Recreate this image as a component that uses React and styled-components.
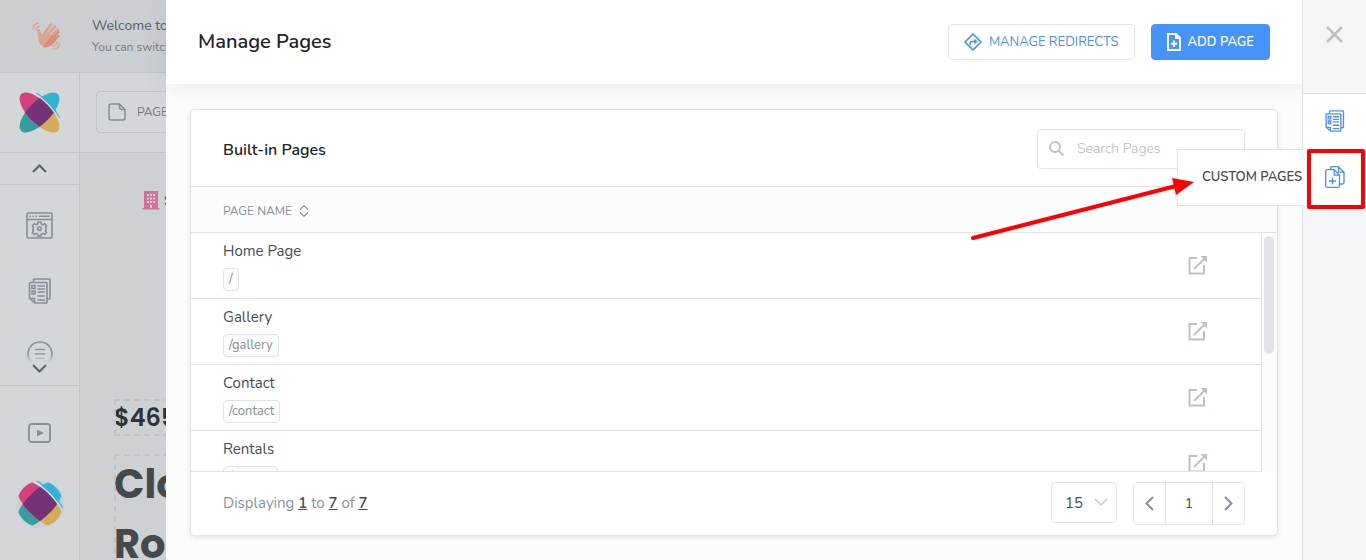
import styled, { createGlobalStyle } from "styled-components";
import { useState } from "react"

const GlobalStyle = createGlobalStyle`
    * {
        box-sizing: border-box;
    }
    html, body, #root {
        height: 100%;
    }
    body {
        margin: 0;
        overflow: hidden;
        font-family: "Nunito", "Open Sans", sans-serif;
        color: #454d57;
    }
    button, input, select {
        font-family: inherit;
    }
    svg {
        display: block;
        flex: none;
    }
`

/* ---------- editor behind the drawer ---------- */

const Editor = styled.div`
    height: 100%;
    display: flex;
    flex-direction: column;
    overflow: hidden;
    background: #d3d7da;
`

const Banner = styled.div`
    display: flex;
    align-items: center;
    gap: 30px;
    height: 73px;
    padding: 0 30px;
    flex: none;
    background: #cbcfd2;
    border-bottom: 1px solid #bfc3ca;
    white-space: nowrap;
`

const BannerTitle = styled.div`
    font-size: 14px;
    line-height: 22px;
    color: #59616a;
`

const BannerText = styled.div`
    font-size: 12px;
    line-height: 20px;
    color: #747b85;
`

const EditorBody = styled.div`
    display: flex;
    flex: 1;
    min-height: 0;
`

const Sidebar = styled.nav`
    display: flex;
    flex-direction: column;
    width: 80px;
    flex: none;
    border-right: 1px solid #bfc3ca;
`

const SideCell = styled.div`
    display: flex;
    align-items: center;
    justify-content: center;
    height: ${props => props.$height}px;
    flex: none;
    border-bottom: ${props => props.$line ? "1px solid #bfc3ca" : "none"};
`

const SideButton = styled.button`
    display: flex;
    align-items: center;
    justify-content: center;
    width: 100%;
    height: ${props => props.$height}px;
    padding: 0;
    border: none;
    background: none;
    color: #878e98;
    cursor: pointer;
`

const SideScroll = styled.div`
    height: 201px;
    flex: none;
    padding-top: 7px;
    border-bottom: 1px solid #bfc3ca;
    overflow: hidden;
`

const FadedButton = styled(SideButton)`
    -webkit-mask-image: linear-gradient(#000 48%, transparent 64%);
    mask-image: linear-gradient(#000 48%, transparent 64%);
`

const ScrollHint = styled.div`
    display: flex;
    justify-content: center;
    margin-top: -20px;
`

const Main = styled.div`
    flex: 1;
    display: flex;
    flex-direction: column;
    min-width: 0;
`

const Toolbar = styled.div`
    display: flex;
    align-items: center;
    height: 80px;
    padding: 0 16px 2px;
    flex: none;
    border-bottom: 1px solid #bfc3ca;
`

const PageButton = styled.button`
    display: flex;
    align-items: center;
    gap: 11px;
    width: 160px;
    height: 42px;
    padding: 0 11px;
    border: 1px solid #bfc3ca;
    border-radius: 4px;
    background: none;
    font-size: 12px;
    color: #747b85;
`

const Canvas = styled.div`
    flex: 1;
    padding: 36px 0 0 34px;
    background: #cdd1d4;
    font-family: "Poppins", "Inter", sans-serif;
    color: #45494c;
`

const Tagline = styled.div`
    display: flex;
    align-items: center;
    gap: 4px;
    height: 22px;
    margin-left: 28px;
    font-size: 16px;
`

const Block = styled.div`
    outline: 2px dashed #bfc3c6;
    outline-offset: -2px;
    white-space: nowrap;
`

const Price = styled(Block)`
    margin-top: 188px;
    font-size: 24px;
    font-weight: 600;
    line-height: 37px;
    color: #2f3336;
`

const Headline = styled(Block)`
    margin-top: 18px;
    font-size: 40px;
    font-weight: 700;
    line-height: 60px;
`

/* ---------- drawer ---------- */

const Drawer = styled.section`
    position: fixed;
    inset: 0 0 0 166px;
    display: flex;
    background: #fbfdfc;
`

const Content = styled.div`
    flex: 1;
    display: flex;
    flex-direction: column;
    min-width: 0;
`

const Header = styled.header`
    display: flex;
    align-items: center;
    gap: 16px;
    height: 84px;
    padding: 0 32px;
    flex: none;
    background: #fff;
    box-shadow: 0 4px 24px rgba(70, 80, 110, 0.1);
`

const Title = styled.h1`
    flex: 1;
    margin: 0;
    padding-bottom: 2px;
    font-size: 20px;
    font-weight: 600;
    color: #212529;
`

const Button = styled.button`
    display: flex;
    align-items: center;
    gap: 7px;
    height: 36px;
    padding: 0 15px;
    border: 1px solid ${props => props.$primary ? "#4693f9" : "#e0e3e8"};
    border-radius: 4px;
    background: ${props => props.$primary ? "#4693f9" : "#fff"};
    color: ${props => props.$primary ? "#fff" : "#4b8ef5"};
    font-size: 13px;
    font-weight: ${props => props.$primary ? 600 : 400};
    cursor: pointer;
`

const Card = styled.div`
    flex: 1;
    display: flex;
    flex-direction: column;
    min-height: 0;
    margin: 25px 24px 24px;
    background: #fff;
    border: 1px solid #e0e3e8;
    border-radius: 5px;
    box-shadow: 0 2px 5px rgba(70, 80, 110, 0.14);
    overflow: hidden;
`

const CardHeader = styled.div`
    display: flex;
    align-items: center;
    justify-content: space-between;
    height: 76px;
    padding: 2px 32px 0;
    flex: none;
`

const CardTitle = styled.h2`
    margin: 0;
    padding-top: 2px;
    font-size: 16px;
    font-weight: 600;
    color: #212529;
`

const Search = styled.label`
    display: flex;
    align-items: center;
    gap: 13px;
    width: 208px;
    height: 40px;
    padding: 0 11px 2px;
    border: 1px solid #e0e3e8;
    border-radius: 4px;
    color: #bcc0c7;
`

const SearchInput = styled.input`
    flex: 1;
    min-width: 0;
    padding: 0;
    border: none;
    outline: none;
    background: none;
    font-size: 14px;
    color: #454d57;

    &::placeholder {
        font-weight: 300;
        color: #b4b8c0;
    }
`

const TableFrame = styled.div`
    position: relative;
    isolation: isolate;
    flex: 1;
    min-height: 0;
    border-bottom: 1px solid #e0e3e8;
`

const TableScroll = styled.div`
    height: 100%;
    overflow-y: auto;
    scrollbar-width: none;
`

const Table = styled.table`
    width: 100%;
    border-collapse: separate;
    border-spacing: 0;
`

const HeadCell = styled.th`
    position: sticky;
    top: 0;
    z-index: 1;
    height: 47px;
    padding: 2px 32px 0;
    border-top: 1px solid #e0e3e8;
    border-bottom: 1px solid #e0e3e8;
    background: #fbfdfc;
    text-align: left;
`

const SortButton = styled.button`
    display: flex;
    align-items: center;
    gap: 7px;
    padding: 0;
    border: none;
    background: none;
    font-size: 12px;
    color: #8b929c;
`

const Cell = styled.td`
    height: 66px;
    padding: ${props => props.$action ? "0 69px 2px 0" : "0 32px"};
    width: ${props => props.$action ? "89px" : "auto"};
    border-bottom: 1px solid #e0e3e8;
`

const PageName = styled.div`
    font-size: 15px;
    line-height: 22px;
    margin-bottom: 6px;
`

const Slug = styled.span`
    display: block;
    width: fit-content;
    padding: 0 5px;
    border: 1px solid #e0e3e8;
    border-radius: 4px;
    background: #fbfdfc;
    font-size: 13px;
    line-height: 21px;
    color: #878e98;
`

const OpenLink = styled.a`
    display: block;
    width: 20px;
    color: #bcc1c9;
`

const ScrollTrack = styled.div`
    position: absolute;
    top: 47px;
    right: 0;
    bottom: -1px;
    z-index: 1;
    width: 16px;
    padding: 3px 2px;
    border-left: 1px solid #e0e3e8;
    background: #fcfcfc;
`

const ScrollThumb = styled.div`
    width: 10px;
    height: 118px;
    border-radius: 5px;
    background: #e0e4ea;
`

const CardFooter = styled.div`
    display: flex;
    align-items: flex-start;
    gap: 16px;
    height: 63px;
    padding: 10px 32px;
    flex: none;
`

const Summary = styled.p`
    flex: 1;
    margin: 0;
    font-size: 15px;
    line-height: 42px;
    color: #8b929c;

    b {
        font-weight: 600;
        color: #454d57;
        text-decoration: underline;
    }
`

const SizeBox = styled.label`
    display: grid;
    align-items: center;
    width: 66px;
    color: #c3c7ce;

    svg {
        grid-area: 1 / 1;
        justify-self: end;
        margin-right: 9px;
        pointer-events: none;
    }
`

const SizeSelect = styled.select`
    grid-area: 1 / 1;
    height: 41px;
    padding: 0 13px;
    appearance: none;
    border: 1px solid #e0e3e8;
    border-radius: 4px;
    background: none;
    font-size: 15px;
    color: #454d57;
`

const Pager = styled.div`
    display: flex;
    height: 43px;
    border: 1px solid #e0e3e8;
    border-radius: 4px;
`

const PagerButton = styled.button`
    display: flex;
    align-items: center;
    justify-content: center;
    width: ${props => props.$current ? 48 : 31}px;
    padding: 0;
    border: solid #e0e3e8;
    border-width: ${props => props.$current ? "0 1px" : "0"};
    background: none;
    font-size: 14px;
    color: ${props => props.$current ? "#454d57" : "#878e98"};
`

const Rail = styled.aside`
    position: relative;
    z-index: 1;
    display: flex;
    flex-direction: column;
    width: 64px;
    flex: none;
    border-left: 1px solid #e0e3e8;
    background: #f4f5f7;
`

const CloseButton = styled.button`
    display: flex;
    align-items: flex-start;
    justify-content: center;
    height: 94px;
    padding: 26px 0 0;
    border: none;
    border-bottom: 1px solid #e0e3e8;
    background: none;
    color: #bcc1c7;
`

const Tab = styled.button`
    position: relative;
    display: flex;
    align-items: center;
    justify-content: center;
    height: ${props => props.$height}px;
    padding: 0 0 2px;
    border: none;
    background: #fff;
    color: #4b8ef5;
`

const TabLabel = styled.span`
    position: absolute;
    top: 0;
    bottom: 0;
    right: 100%;
    display: flex;
    align-items: center;
    width: 126px;
    padding: 0 0 2px 24px;
    border: 1px solid #e0e3e8;
    border-right: none;
    background: #fff;
    font-size: 13px;
    font-weight: 600;
    color: #454d57;
    white-space: nowrap;
`

const Marker = styled.span`
    position: absolute;
    inset: 0 1px -3px 4px;
    border: 4px solid #fe0000;
    border-radius: 2px;
`

const Arrow = styled.svg`
    position: absolute;
    z-index: 2;
    top: 176px;
    right: 172px;
    pointer-events: none;
`

/* ---------- icons ---------- */

function Chevron({ d, width, height, color = "currentColor", stroke = 2 }) {
    return (
        <svg width={width} height={height} fill="none" stroke={color} strokeWidth={stroke}>
            <path d={d} />
        </svg>
    )
}

function HandIcon() {
    return (
        <svg width="32" height="32" fill="none" strokeLinecap="round">
            <path d="M8.500 10.500L11 17M12 16.500L21 4.500M14 18L25 6.500M17 20L27.500 10" stroke="#d8a594" strokeWidth="2.800" />
            <path d="M7.500 10.500q2-1 3.500 4l2 .5 4-3 7 6-9.500 9q-5-2-6-6z" fill="#d8a594" />
            <path d="M12.500 27L22 15l5 2q-1 6-6 8.500-5 3-8.500 1.500z" fill="#d98e73" />
            <path d="M22 18.500l6.500-6.500M23.500 20l5-4" stroke="#d98e73" strokeWidth="2.400" />
            <path d="M3 9q0-5 6-6M6 10q0-3 4-4M29 23q1 6-6 6M27 22q0 3-4 4" stroke="#d8a594" strokeWidth="1.300" />
        </svg>
    )
}

function Logo({ size, scale, round }) {
    const id = round ? "round" : "plain"
    const half = size / 2
    return (
        <svg width={size} height={size} viewBox={`${-half} ${-half} ${size} ${size}`}>
            <defs>
                <clipPath id={`${id}-lens`}>
                    <ellipse rx="26" ry="11" transform="rotate(-45)" />
                </clipPath>
                <clipPath id={`${id}-edge`}>
                    {round ? <circle r="23" /> : <rect x="-21" y="-21" width="42" height="42" />}
                </clipPath>
            </defs>
            {round && <circle r="24" fill="#cbcfd4" />}
            <g clipPath={`url(#${id}-edge)`}>
                <g transform={`scale(${scale})`}>
                    <g transform="rotate(-45)">
                        <path d="M0-11A26 11 0 0 0 0 11z" fill="#349e9f" />
                        <path d="M0-11A26 11 0 0 1 0 11z" fill="#33b2d8" />
                    </g>
                    <g transform="rotate(45)">
                        <path d="M-16-11.500Q0-16 18-10.500" fill="none" stroke="#33b2d8" strokeWidth="1" />
                        <path d="M-18-9Q0-15 19-8" fill="none" stroke="#d3e3ec" strokeWidth="1.300" />
                        <path d="M0-11A26 11 0 0 0 0 11z" fill="#d5417a" />
                        <path d="M0-11A26 11 0 0 1 0 11z" fill="#d4ab56" />
                    </g>
                    <g clipPath={`url(#${id}-lens)`}>
                        <ellipse rx="26" ry="11" transform="rotate(45)" fill="#763378" />
                    </g>
                </g>
            </g>
        </svg>
    )
}

function SettingsIcon() {
    return (
        <svg width="27" height="27" fill="none" stroke="currentColor" strokeWidth="1.600">
            <rect x="1" y="1" width="25" height="25" rx="1" />
            <path d="M1 7.500h25M3.500 4.200h1.500M6.500 4.200H8M9.500 4.200H11M13 4.200h10.500" />
            <circle cx="13.500" cy="16.500" r="1.800" />
            <path d="M12.200 10h2.600l.5 2 1.600.7 1.800-1 1.800 1.900-1 1.700.6 1.200v1l-.6 1.500 1 1.600-1.800 1.900-1.800-1-1.600.6-.5 2h-2.600l-.5-2-1.600-.6-1.800 1-1.800-1.900 1-1.600-.6-1.500v-1l.6-1.200-1-1.700 1.800-1.900 1.800 1 1.600-.7z" />
        </svg>
    )
}

function PagesIcon({ size = 26, stroke = 1.6 }) {
    return (
        <svg width={size} height={size} viewBox="0 0 26 26" fill="none" stroke="currentColor" strokeWidth={stroke}>
            <path d="M6.500 4.500V1.800q0-.8.8-.8h14.900q.8 0 .8.800v18.400q0 .8-.8.8H20" />
            <path d="M3.300 4.500h15.900q.8 0 .8.800v18.900q0 .8-.8.800H7.500L2.500 20V5.300q0-.8.8-.8zM2.500 20.500h5V25" />
            <path d="M5 7.500h3v3H5zM5 13h3v3H5zM10.500 8H18M10.500 11H18M10.500 14H18M10.500 18H18M10.500 22H18" />
        </svg>
    )
}

function MenuIcon() {
    return (
        <svg width="26" height="26" fill="none" stroke="currentColor" strokeWidth="1.700">
            <circle cx="13" cy="13" r="12" />
            <path d="M8 8.500h10M8 13h10M8 17.500h10" />
        </svg>
    )
}

function PlayIcon() {
    return (
        <svg width="24" height="20" fill="none" stroke="currentColor" strokeWidth="1.800">
            <rect x="1" y="1" width="21" height="18" rx="2.500" />
            <path d="M9 6.500l7 3.500-7 3.500z" fill="currentColor" stroke="none" />
        </svg>
    )
}

function FileIcon() {
    return (
        <svg width="18" height="18" fill="none" stroke="#878e98" strokeWidth="1.500">
            <path d="M3 1h8.500L17 6.500V15q0 2-2 2H3q-2 0-2-2V3q0-2 2-2zM11.500 1v3.500q0 2 2 2H17" />
        </svg>
    )
}

function BuildingIcon() {
    return (
        <svg width="18" height="20">
            <path d="M2 1h14v17h1.500v1.500H.5V18H2z" fill="#cf7299" />
            <path d="M5 4h2v2H5zM8 4h2v2H8zM11 4h2v2h-2zM5 7.500h2v2H5zM8 7.500h2v2H8zM11 7.500h2v2h-2zM5 11h2v2H5zM8 11h2v2H8zM11 11h2v2h-2zM8 15h2v3H8z" fill="#dfd0d8" />
        </svg>
    )
}

function RedirectIcon() {
    return (
        <svg width="18" height="18" viewBox="1 1 18 18" fill="none" stroke="currentColor" strokeWidth="1.700" strokeLinejoin="round">
            <path d="M10 2L18 10 10 18 2 10z" />
            <path d="M7.300 13v-2q0-1.500 1.500-1.500H12" />
            <path d="M11.500 7l2.800 2.500-2.800 2.500z" fill="currentColor" strokeWidth=".5" />
        </svg>
    )
}

function AddFileIcon() {
    return (
        <svg width="14" height="18" fill="none" stroke="currentColor" strokeWidth="1.900">
            <path d="M1 1h8L13 5v12H1z" />
            <path d="M8.500 1v4.500H13z" fill="currentColor" strokeWidth="1" />
            <path d="M7 7.500v6.500M3.800 10.800h6.400" />
        </svg>
    )
}

function SearchIcon() {
    return (
        <svg width="15" height="15" fill="none" stroke="currentColor" strokeWidth="2">
            <circle cx="6" cy="6" r="5" />
            <path d="M9.700 9.700l4.600 4.600" />
        </svg>
    )
}

function SortIcon() {
    return (
        <svg width="10" height="12" fill="none" stroke="currentColor" strokeWidth="1.100">
            <path d="M1 4.500L5 .8l4 3.700M1 7.500l4 3.700 4-3.700" />
        </svg>
    )
}

function OpenIcon() {
    return (
        <svg width="20" height="20" fill="none" stroke="currentColor" strokeWidth="2">
            <path d="M9 3H1.500v15.500H16V10M6 14L17 3" />
            <path d="M12.500 1H19v6.500z" fill="currentColor" stroke="none" />
        </svg>
    )
}

function CustomPagesIcon() {
    return (
        <svg width="20" height="22" viewBox="0 0 20 22" fill="none" stroke="currentColor" strokeWidth="1.300" strokeLinejoin="round">
            <path d="M5.500 3.500V2q0-1.300 1.300-1.300h6.700L19 6.200v10.300q0 1.500-1.500 1.500H15M13.500 1v5.200H19" />
            <path d="M2.300 3.700h6.900l5.300 5.500v10.300q0 1.800-1.800 1.800H2.300Q.7 21.300.7 19.500V5.500q0-1.800 1.600-1.800zM9.200 3.700v5.500h5.300" />
            <path d="M7.500 11.500v7M4 15h7" />
        </svg>
    )
}

const pages = [
    { name: "Home Page", slug: "/" },
    { name: "Gallery", slug: "/gallery" },
    { name: "Contact", slug: "/contact" },
    { name: "Rentals", slug: "/rentals" },
]

function PagesTable({ items }) {
    return (
        <TableFrame>
            <TableScroll>
                <Table>
                    <thead>
                        <tr>
                            <HeadCell colSpan={2}>
                                <SortButton>PAGE NAME <SortIcon /></SortButton>
                            </HeadCell>
                        </tr>
                    </thead>
                    <tbody>
                        {items.map((item) =>
                            <tr key={item.slug}>
                                <Cell>
                                    <PageName>{item.name}</PageName>
                                    <Slug>{item.slug}</Slug>
                                </Cell>
                                <Cell $action>
                                    <OpenLink href={"#" + item.slug} aria-label={item.name}><OpenIcon /></OpenLink>
                                </Cell>
                            </tr>
                        )}
                    </tbody>
                </Table>
            </TableScroll>
            <ScrollTrack><ScrollThumb /></ScrollTrack>
        </TableFrame>
    )
}

function EditorPage() {
    return (
        <Editor>
            <Banner>
                <HandIcon />
                <div>
                    <BannerTitle>Welcome to</BannerTitle>
                    <BannerText>You can switch</BannerText>
                </div>
            </Banner>
            <EditorBody>
                <Sidebar>
                    <SideCell $height={80} $line><Logo size={41} scale={1} /></SideCell>
                    <SideCell $height={32} $line>
                        <Chevron d="M1 8l6.500-6.500L14 8" width={15} height={9} color="#59616a" />
                    </SideCell>
                    <SideScroll>
                        <SideButton $height={66} aria-label="Settings"><SettingsIcon /></SideButton>
                        <SideButton $height={66} aria-label="Pages"><PagesIcon /></SideButton>
                        <FadedButton $height={60} aria-label="Menus"><MenuIcon /></FadedButton>
                        <ScrollHint>
                            <Chevron d="M1 1l6.500 6.500L14 1" width={15} height={9} color="#59616a" />
                        </ScrollHint>
                    </SideScroll>
                    <SideButton $height={94} aria-label="Videos"><PlayIcon /></SideButton>
                    <SideCell $height={48}><Logo size={48} scale={1.2} round /></SideCell>
                </Sidebar>
                <Main>
                    <Toolbar>
                        <PageButton><FileIcon /> PAGE</PageButton>
                    </Toolbar>
                    <Canvas>
                        <Tagline><BuildingIcon /> S</Tagline>
                        <Price>$465</Price>
                        <Headline>Clo<br />Ro</Headline>
                    </Canvas>
                </Main>
            </EditorBody>
        </Editor>
    )
}

function App() {

    const [search, setSearch] = useState("")
    const shown = pages.filter((item) => item.name.toLowerCase().includes(search.toLowerCase()))

    return (
        <>
            <GlobalStyle />
            <EditorPage />
            <Drawer>
                <Content>
                    <Header>
                        <Title>Manage Pages</Title>
                        <Button><RedirectIcon /> MANAGE REDIRECTS</Button>
                        <Button $primary><AddFileIcon /> ADD PAGE</Button>
                    </Header>
                    <Card>
                        <CardHeader>
                            <CardTitle>Built-in Pages</CardTitle>
                            <Search>
                                <SearchIcon />
                                <SearchInput
                                    placeholder="Search Pages"
                                    value={search}
                                    onChange={(event) => setSearch(event.target.value)}
                                />
                            </Search>
                        </CardHeader>
                        <PagesTable items={shown} />
                        <CardFooter>
                            <Summary>Displaying <b>1</b> to <b>7</b> of <b>7</b></Summary>
                            <SizeBox>
                                <SizeSelect aria-label="Rows per page" defaultValue="15">
                                    <option>15</option>
                                </SizeSelect>
                                <Chevron d="M1 1l6 6 6-6" width={14} height={9} stroke={1.5} />
                            </SizeBox>
                            <Pager>
                                <PagerButton aria-label="Previous"><Chevron d="M8 1L1.500 7.500 8 14" width={9} height={15} /></PagerButton>
                                <PagerButton $current>1</PagerButton>
                                <PagerButton aria-label="Next"><Chevron d="M1 1l6.500 6.500L1 14" width={9} height={15} /></PagerButton>
                            </Pager>
                        </CardFooter>
                    </Card>
                </Content>
                <Rail>
                    <CloseButton aria-label="Close">
                        <Chevron d="M1 1l15 15M16 1L1 16" width={17} height={17} stroke={2.5} />
                    </CloseButton>
                    <Tab $height={55} aria-label="Built-in pages"><PagesIcon size={22} /></Tab>
                    <Tab $height={57}>
                        <TabLabel>CUSTOM PAGES</TabLabel>
                        <CustomPagesIcon />
                        <Marker />
                    </Tab>
                </Rail>
                <Arrow width="224" height="66">
                    <path d="M3 62L206 10" stroke="#fe0000" strokeWidth="4" strokeLinecap="round" />
                    <path d="M202 2l22 4-18 13z" fill="#fe0000" />
                </Arrow>
            </Drawer>
        </>
    )
}

export default App
